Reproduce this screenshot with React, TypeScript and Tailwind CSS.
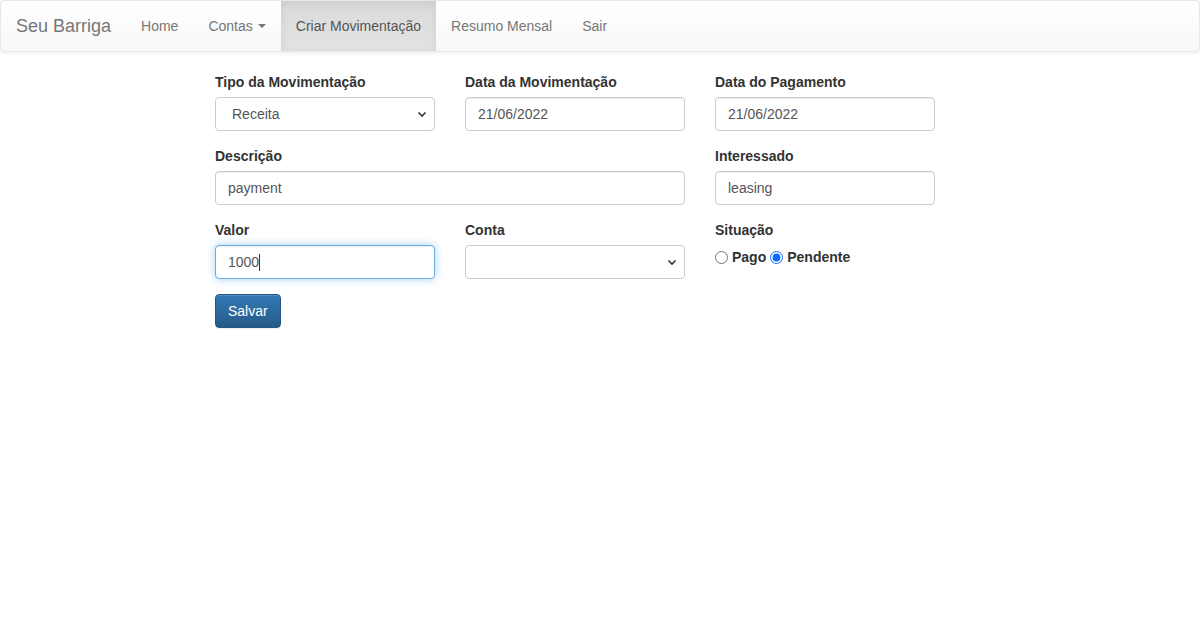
import React from "react"

const baseInput =
  "block w-full h-[34px] px-3 py-[6px] text-[14px] leading-[20px] text-[#555] bg-white border rounded-[4px] outline-none"
const inputCls = baseInput + " border-[#ccc] shadow-[inset_0_1px_1px_rgba(0,0,0,0.075)]"
const focusCls =
  baseInput + " border-[#66afe9] shadow-[inset_0_1px_1px_rgba(0,0,0,0.075),0_0_8px_rgba(102,175,233,0.6)]"
const selectCls = baseInput + " border-[#ccc] appearance-none"

function Chevron() {
  return (
    <svg
      width="10"
      height="10"
      viewBox="0 0 10 10"
      className="absolute right-[8px] top-[12px] pointer-events-none"
    >
      <path d="M1.5 3.5 L5 7 L8.5 3.5" fill="none" stroke="#333" strokeWidth="1.6" />
    </svg>
  )
}

function Label({ children }: { children: React.ReactNode }) {
  return <label className="block mb-[5px] text-[14px] leading-[20px] font-bold text-[#333]">{children}</label>
}

export default function App() {
  return (
    <div className="min-h-[631px] bg-white text-[#333] font-['Liberation_Sans','Helvetica_Neue',Arial,sans-serif] text-[14px]">
      <nav className="h-[52px] border border-[#e7e7e7] rounded-[4px] bg-[linear-gradient(to_bottom,#fff_0,#f8f8f8_100%)] shadow-[0_1px_5px_rgba(0,0,0,0.075)] mb-[20px]">
        <div className="flex h-[50px] px-[15px]">
          <a className="-ml-[15px] px-[15px] py-[15px] text-[18px] leading-[20px] text-[#777]">Seu Barriga</a>
          <ul className="flex">
            <li className="px-[15px] py-[15px] leading-[20px] text-[#777]">Home</li>
            <li className="px-[15px] py-[15px] leading-[20px] text-[#777] flex items-center">
              Contas
              <span className="ml-[5px] w-0 h-0 border-l-[4px] border-r-[4px] border-t-[4px] border-l-transparent border-r-transparent border-t-[#777]" />
            </li>
            <li className="px-[15px] py-[15px] leading-[20px] text-[#555] bg-[linear-gradient(to_bottom,#dbdbdb_0,#e2e2e2_100%)] shadow-[inset_0_3px_9px_rgba(0,0,0,0.075)]">
              Criar Movimentação
            </li>
            <li className="px-[15px] py-[15px] leading-[20px] text-[#777]">Resumo Mensal</li>
            <li className="px-[15px] py-[15px] leading-[20px] text-[#777]">Sair</li>
          </ul>
        </div>
      </nav>

      <div className="w-[800px] mx-auto">
        <form className="flex flex-wrap">
          <div className="w-[250px] px-[15px] mb-[15px]">
            <Label>Tipo da Movimentação</Label>
            <div className="relative">
              <select className={selectCls + " pl-[16px]"} defaultValue="REC">
                <option value="REC">Receita</option>
                <option value="DESP">Despesa</option>
              </select>
              <Chevron />
            </div>
          </div>
          <div className="w-[250px] px-[15px] mb-[15px]">
            <Label>Data da Movimentação</Label>
            <input className={inputCls} defaultValue="21/06/2022" />
          </div>
          <div className="w-[250px] px-[15px] mb-[15px]">
            <Label>Data do Pagamento</Label>
            <input className={inputCls} defaultValue="21/06/2022" />
          </div>

          <div className="w-[500px] px-[15px] mb-[15px]">
            <Label>Descrição</Label>
            <input className={inputCls} defaultValue="payment" />
          </div>
          <div className="w-[250px] px-[15px] mb-[15px]">
            <Label>Interessado</Label>
            <input className={inputCls} defaultValue="leasing" />
          </div>

          <div className="w-[250px] px-[15px] mb-[15px]">
            <Label>Valor</Label>
            <div className="relative">
              <input className={focusCls} defaultValue="1000" />
              <span className="absolute left-[44px] top-[9px] w-px h-[17px] bg-[#333]" />
            </div>
          </div>
          <div className="w-[250px] px-[15px] mb-[15px]">
            <Label>Conta</Label>
            <div className="relative">
              <select className={selectCls} defaultValue="">
                <option value=""></option>
              </select>
              <Chevron />
            </div>
          </div>
          <div className="w-[250px] px-[15px] mb-[15px]">
            <Label>Situação</Label>
            <div className="flex items-center h-[24px] font-bold text-[14px] text-[#333]">
              <input type="radio" name="status" className="m-0 w-[13px] h-[13px] accent-[#0a6cff]" />
              <span className="ml-[4px] mr-[4px]">Pago</span>
              <input type="radio" name="status" defaultChecked className="m-0 w-[13px] h-[13px] accent-[#0a6cff]" />
              <span className="ml-[4px]">Pendente</span>
            </div>
          </div>

          <div className="w-full px-[15px]">
            <button
              type="button"
              className="h-[34px] px-[12px] text-[14px] leading-[20px] text-white rounded-[4px] border border-[#245580] bg-[linear-gradient(to_bottom,#337ab7_0,#265a88_100%)] shadow-[inset_0_1px_0_rgba(255,255,255,0.15),0_1px_1px_rgba(0,0,0,0.075)]"
            >
              Salvar
            </button>
          </div>
        </form>
      </div>
    </div>
  )
}
